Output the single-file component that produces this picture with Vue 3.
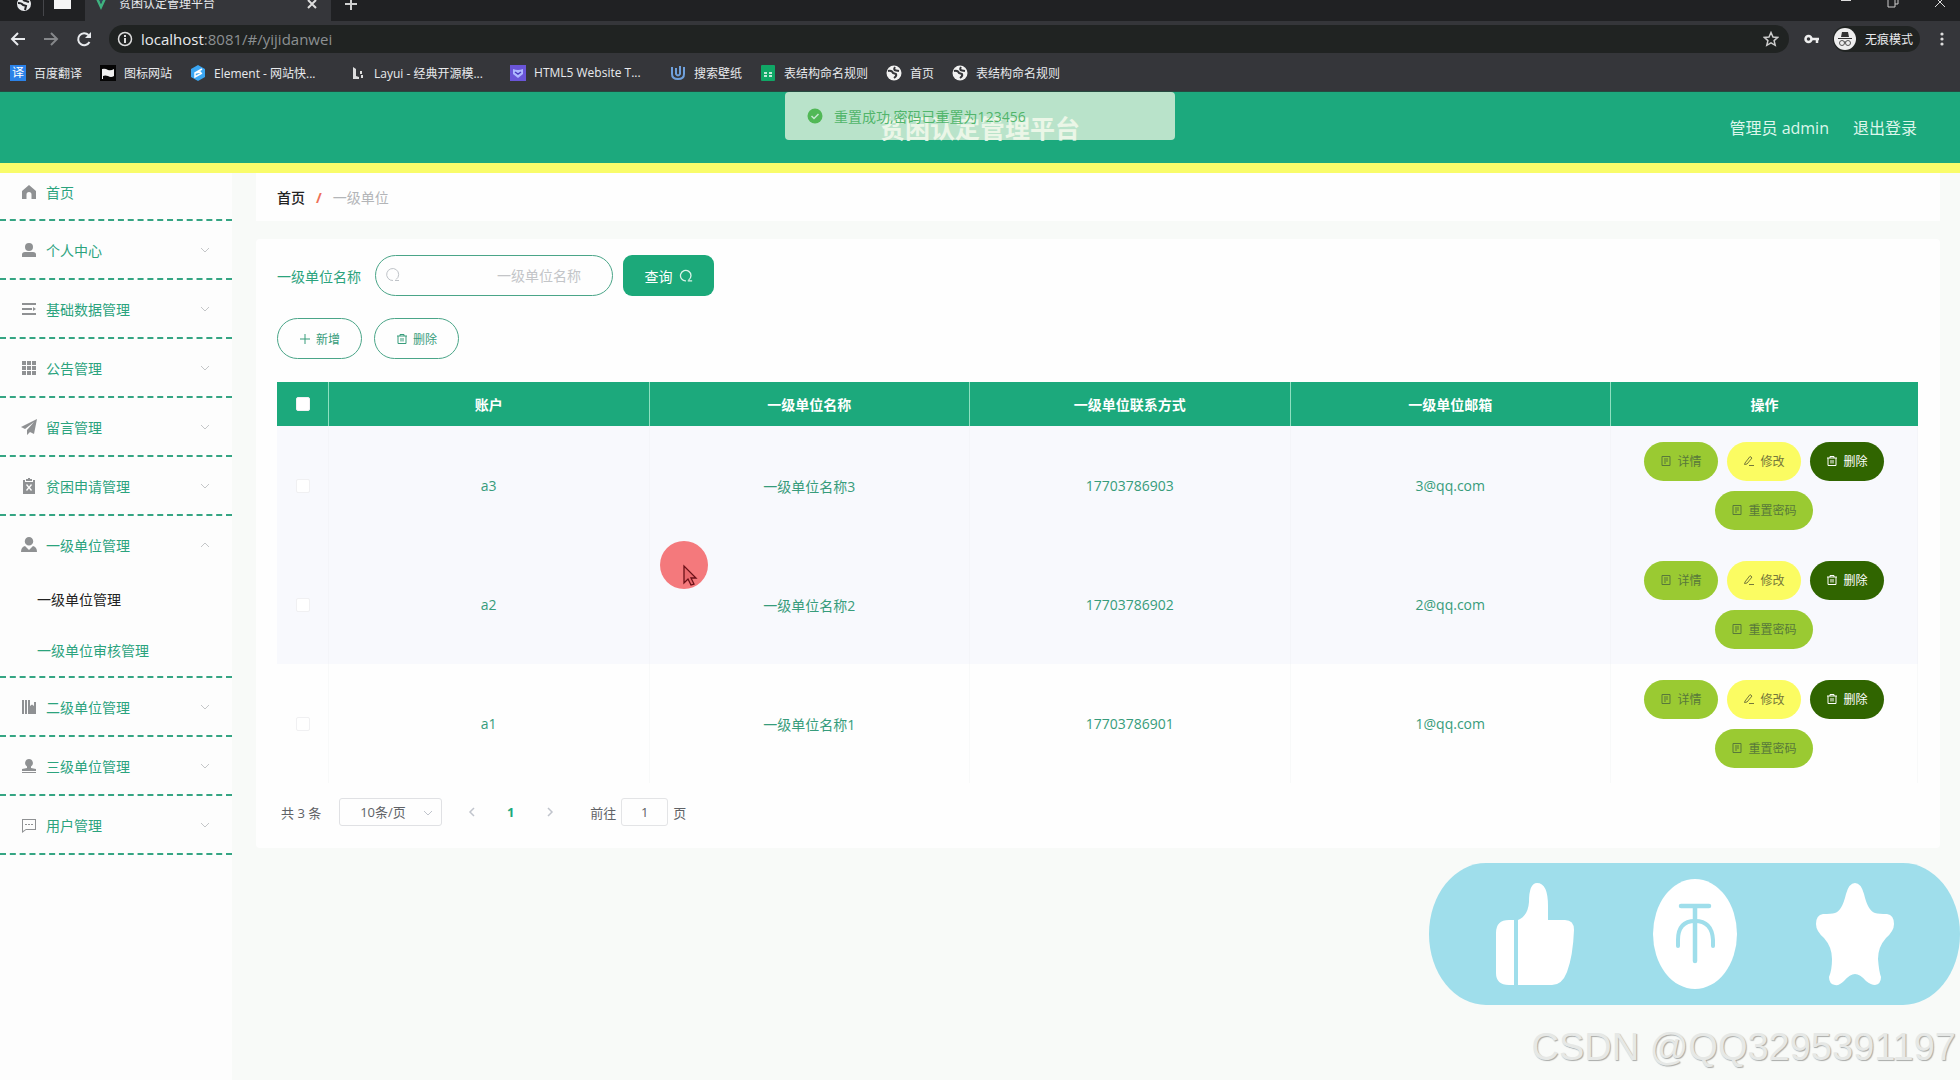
<script setup>
import { ref } from 'vue'

const bookmarks = [
  { icon: 'translate', label: '百度翻译' },
  { icon: 'flag', label: '图标网站' },
  { icon: 'element', label: 'Element - 网站快...', long: true },
  { icon: 'layui', label: 'Layui - 经典开源模...', long: true },
  { icon: 'html5', label: 'HTML5 Website T...', long: true },
  { icon: 'wallpaper', label: '搜索壁纸' },
  { icon: 'sheet', label: '表结构命名规则' },
  { icon: 'globe', label: '首页' },
  { icon: 'globe', label: '表结构命名规则' }
]

const glyphs = {
  home: 'M8 1 1 7v8h4.500v-4.500a2.500 2.500 0 0 1 5 0V15H15V7z',
  user: 'M8 1a4 4 0 1 1 0 8 4 4 0 0 1 0-8zM1 15v-2.500Q1 10 4 10h8q3 0 3 2.500V15z',
  list: 'M1 2h14v2H1zM1 7h10v2H1zM12 6l3 2-3 2zM1 12h14v2H1z',
  grid: 'M1 1h4v4H1zM6 1h4v4H6zM11 1h4v4h-4zM1 6h4v4H1zM6 6h4v4H6zM11 6h4v4h-4zM1 11h4v4H1zM6 11h4v4H6zM11 11h4v4h-4z',
  plane: 'M16 0 0 8l4 2 9-7-7 8v5l3-3 4 2z',
  clipboard: 'M2 2h2v2h8V2h2v14H2zM5 1h2V0h2v1h2v2H5zM5 7l2 2.500L5 12l1 1 2-2.500 2 2.500 1-1-2-2.500L11 7l-1-1-2 2.500L6 6z',
  custom: 'M8 0a4 4 0 1 1 0 8.500 4 4 0 0 1 0-8.500zM0 15q0-5 4-6l4 4 4-4q4 1 4 6z',
  books: 'M1 1h2v14H1zM4 1h2v14H4zM7 1h2v6l2-1.500L13 7V3h2v12H7z',
  stamp: 'M8 1a4 4 0 0 1 2 7.400V10l5 1v2H1v-2l5-1V8.400A4 4 0 0 1 8 1zM1 14h14v1H1z',
  chat: 'M1 2h14v11H5l-4 3zM2 3v11l3-2h9V3zM4 7h2v1H4zM7 7h2v1H7zM10 7h2v1h-2z'
}

const menu = [
  { icon: 'home', label: '首页', first: true },
  { icon: 'user', label: '个人中心', arrow: true },
  { icon: 'list', label: '基础数据管理', arrow: true },
  { icon: 'grid', label: '公告管理', arrow: true },
  { icon: 'plane', label: '留言管理', arrow: true },
  { icon: 'clipboard', label: '贫困申请管理', arrow: true },
  {
    icon: 'custom',
    label: '一级单位管理',
    arrow: true,
    open: true,
    children: [{ label: '一级单位管理', active: true }, { label: '一级单位审核管理' }]
  },
  { icon: 'books', label: '二级单位管理', arrow: true },
  { icon: 'stamp', label: '三级单位管理', arrow: true },
  { icon: 'chat', label: '用户管理', arrow: true }
]

const rows = [
  { account: 'a3', name: '一级单位名称3', phone: '17703786903', mail: '3@qq.com' },
  { account: 'a2', name: '一级单位名称2', phone: '17703786902', mail: '2@qq.com' },
  { account: 'a1', name: '一级单位名称1', phone: '17703786901', mail: '1@qq.com' }
]

const docPath = 'M2 1.500h8v9H2zM4 4h4M4 6h4M4 8h2'
const editPath = 'M2 8 7 1.500l2 1.500-5 6-2.500.500zM6 10.500h5'
const trashPath = 'M1 3h10M4 3V1.500h4V3M2 3v7.500h8V3M5 5v3.500M7 5v3.500'
const actions = [
  { label: '详情', kind: 'lime', d: docPath },
  { label: '修改', kind: 'yellow', d: editPath },
  { label: '删除', kind: 'dark', d: trashPath },
  { label: '重置密码', kind: 'lime wide', d: docPath }
]

const keyword = ref('')
const jump = ref('1')
</script>

<template>
  <div class="screen" lang="zh-CN">
    <div class="browser">
      <div class="tabs">
        <svg class="tab-globe" width="16" height="16" viewBox="0 0 16 16"><circle cx="8" cy="8" r="7" fill="#e8eaed" /><path d="M2 7q4 0 5 2l3 1-1 4M7 2q0 3 3 3l3 1" fill="none" stroke="#202124" stroke-width="2" /></svg>
        <span class="tab-line"></span>
        <span class="tab-card"></span>
        <div class="tab">
          <svg width="12" height="14" viewBox="0 0 12 14"><path d="M0 0h3l3 7 3-7h3L6 13z" fill="#3fb27f" /><path d="M3 0h2l1 2 1-2h2L6 7z" fill="#34495e" /></svg>
          <span class="tab-title">贫困认定管理平台</span>
          <svg width="10" height="10" viewBox="0 0 10 10"><path d="M1 1l8 8M9 1 1 9" stroke="#dedede" stroke-width="2" /></svg>
        </div>
        <svg class="tab-plus" width="12" height="12" viewBox="0 0 12 12"><path d="M6 0v12M0 6h12" stroke="#d0d0d0" stroke-width="2" /></svg>
        <div class="window-tools">
          <svg width="12" height="12" viewBox="0 0 12 12"><path d="M1 4h10" stroke="#ddd" stroke-width="2" /></svg>
          <svg width="12" height="12" viewBox="0 0 12 12"><path d="M1 3h7v8H1zM4 3V0h7v8H8" fill="none" stroke="#ccc" /></svg>
          <svg width="12" height="12" viewBox="0 0 12 12"><path d="M1 1l10 10M11 1 1 11" stroke="#ddd" /></svg>
        </div>
      </div>
      <div class="toolbar">
        <svg width="16" height="16" viewBox="0 0 16 16"><path d="M15 8H2M8 2 2 8l6 6" fill="none" stroke="#e8eaed" stroke-width="2" /></svg>
        <svg width="16" height="16" viewBox="0 0 16 16"><path d="M1 8h13M8 2l6 6-6 6" fill="none" stroke="#85878a" stroke-width="2" /></svg>
        <svg width="16" height="16" viewBox="0 0 16 16"><path d="M13.500 11A6 6 0 1 1 12.500 4" fill="none" stroke="#e8eaed" stroke-width="2" /><path d="M15 1v6H9z" fill="#e8eaed" /></svg>
        <div class="address">
          <svg width="16" height="16" viewBox="0 0 16 16"><circle cx="8" cy="8" r="6.500" fill="none" stroke="#ddd" stroke-width="1.500" /><path d="M8 7v5M8 4v2" stroke="#ddd" stroke-width="2" /></svg>
          <span class="url"><b>localhost</b>:8081/#/yijidanwei</span>
          <svg width="16" height="16" viewBox="0 0 16 16"><path d="M8 1.500l2 4.500 4.700.4-3.600 3.200 1.100 4.700L8 11.800l-4.200 2.500 1.100-4.700L1.300 6.400 6 6z" fill="none" stroke="#ccc" stroke-width="1.500" /></svg>
        </div>
        <svg class="key" width="16" height="16" viewBox="0 0 16 16"><circle cx="4.500" cy="8" r="3" fill="none" stroke="#eee" stroke-width="2.500" /><path d="M7 8h8M13 8v4" stroke="#eee" stroke-width="2.500" /></svg>
        <div class="incognito">
          <svg width="24" height="24" viewBox="0 0 24 24"><circle cx="12" cy="12" r="11" fill="#eee" /><path d="M9 5h6l1 5H8zM5 11h14v1H5z" fill="#333" /><g fill="none" stroke="#555"><circle cx="9" cy="16" r="2.500" /><circle cx="15" cy="16" r="2.500" /><path d="M11 15h2" /></g></svg>
          <span>无痕模式</span>
        </div>
        <svg class="dots" width="4" height="16" viewBox="0 0 4 16" fill="#ddd"><circle cx="2" cy="3" r="1.600" /><circle cx="2" cy="8" r="1.600" /><circle cx="2" cy="13" r="1.600" /></svg>
      </div>
      <nav class="bookmarks">
        <a v-for="(b, i) in bookmarks" :key="i" href="#" class="bookmark">
          <span v-if="b.icon === 'translate'" class="translate">译</span>
          <svg v-else width="16" height="16" viewBox="0 0 16 16">
            <template v-if="b.icon === 'flag'"><rect width="16" height="16" fill="#050505" /><path d="M2 4q3-1 6 1 3 1 6-1v7q-3 2-6 0-3-1-5 0v3H2z" fill="#eee" /></template>
            <template v-else-if="b.icon === 'element'"><path d="M8 0l7 4v8l-7 4-7-4V4z" fill="#3ba6f2" /><path d="M12 4 5 8v4l7-4M5 8l6-1" stroke="#fff" stroke-width="1.500" fill="none" /></template>
            <path v-else-if="b.icon === 'layui'" d="M3 2l3 2v7l3 1v2H3zM10 6h2v3h-2zM11 10h2v3h-2z" fill="#ddd" />
            <template v-else-if="b.icon === 'html5'"><rect width="16" height="16" fill="#6a55d8" /><path d="M3 4q5 2 10 0v5l-5 4-5-4z" fill="#aeb7ff" /><path d="M5 7l3 2 3-2" fill="none" stroke="#4b3bc0" stroke-width="1.500" /></template>
            <path v-else-if="b.icon === 'wallpaper'" d="M2 2v7q0 5 6 5t6-5V2M6 3v6q2 3 4 0V1" fill="none" stroke="#6fa0dc" stroke-width="2" />
            <template v-else-if="b.icon === 'sheet'"><rect x="1" width="14" height="16" rx="1" fill="#10a766" /><path d="M4 8h3M9 8h3M4 11h3M9 11h3" stroke="#fff" stroke-width="1.500" /></template>
            <template v-else><circle cx="8" cy="8" r="7.500" fill="#f1f1f1" /><path d="M2 6q4-1 5 2l3 1q1 2-2 4M9 2q-2 3 1 3.500l3 .500" fill="none" stroke="#35363a" stroke-width="2" /></template>
          </svg>
          <span :class="['bookmark-label', { long: b.long }]">{{ b.label }}</span>
        </a>
      </nav>
    </div>

    <header class="header">
      <h1>贫困认定管理平台</h1>
      <div class="account">
        <span>管理员 admin</span>
        <a href="#">退出登录</a>
      </div>
      <div class="message" role="alert">
        <svg width="16" height="16" viewBox="0 0 16 16"><circle cx="8" cy="8" r="7.500" fill="#51b856" /><path d="M4.500 8l2.500 2.500L11.500 6" fill="none" stroke="#c5e8cf" stroke-width="1.500" /></svg>
        <span>重置成功,密码已重置为123456</span>
      </div>
    </header>

    <div class="body">
      <aside class="sidebar">
        <ul>
          <li v-for="m in menu" :key="m.label" :class="{ first: m.first }">
            <a href="#" class="item">
              <svg width="16" height="16" viewBox="0 0 16 16"><path :d="glyphs[m.icon]" fill="#8f9193" fill-rule="evenodd" /></svg>
              <span>{{ m.label }}</span>
              <svg v-if="m.arrow" :class="['arrow', { open: m.open }]" width="12" height="12" viewBox="0 0 12 12"><path d="M2 4l4 4 4-4" fill="none" stroke="#c4c6c8" /></svg>
            </a>
            <div v-if="m.children" class="subs">
              <a v-for="c in m.children" :key="c.label" href="#" :class="['sub', { active: c.active }]">{{ c.label }}</a>
            </div>
          </li>
        </ul>
      </aside>

      <main class="main">
        <nav class="crumbs">
          <a href="#">首页</a><i>/</i><span>一级单位</span>
        </nav>

        <section class="panel">
          <form class="search" @submit.prevent>
            <label for="unit-name">一级单位名称</label>
            <div class="field">
              <svg width="16" height="16" viewBox="0 0 16 16"><path d="M11 12.500A6 6 0 1 0 8 13.500M10 13.500h4" fill="none" stroke="#bfc3c8" /></svg>
              <input id="unit-name" v-model="keyword" type="text" placeholder="一级单位名称" />
            </div>
            <button type="submit" class="query">查询
              <svg width="14" height="14" viewBox="0 0 16 16"><path d="M11 12.500A6 6 0 1 0 8 13.500M10 13.500h5" fill="none" stroke="#d9f3e8" stroke-width="1.500" /></svg>
            </button>
          </form>

          <div class="tools">
            <button type="button" class="outline">
              <svg width="12" height="12" viewBox="0 0 12 12"><path d="M6 1v10M1 6h10" fill="none" stroke="currentColor" /></svg>新增
            </button>
            <button type="button" class="outline">
              <svg width="12" height="12" viewBox="0 0 12 12"><path :d="trashPath" fill="none" stroke="currentColor" /></svg>删除
            </button>
          </div>

          <table>
            <colgroup>
              <col class="col-check" /><col /><col /><col /><col /><col class="col-ops" />
            </colgroup>
            <thead>
              <tr>
                <th><input type="checkbox" aria-label="全选" /></th>
                <th>账户</th>
                <th>一级单位名称</th>
                <th>一级单位联系方式</th>
                <th>一级单位邮箱</th>
                <th>操作</th>
              </tr>
            </thead>
            <tbody>
              <tr v-for="r in rows" :key="r.account">
                <td><input type="checkbox" :aria-label="r.account" /></td>
                <td>{{ r.account }}</td>
                <td>{{ r.name }}</td>
                <td>{{ r.phone }}</td>
                <td>{{ r.mail }}</td>
                <td>
                  <div class="ops">
                    <button v-for="a in actions" :key="a.label" type="button" :class="['op', a.kind]">
                      <svg width="12" height="12" viewBox="0 0 12 12"><path :d="a.d" fill="none" stroke="currentColor" /></svg>{{ a.label }}
                    </button>
                  </div>
                </td>
              </tr>
            </tbody>
          </table>

          <div class="pager">
            <span>共 3 条</span>
            <div class="size">
              <select aria-label="每页条数"><option>10条/页</option></select>
              <svg width="12" height="12" viewBox="0 0 12 12"><path d="M2 4l4 4 4-4" fill="none" stroke="#c0c4cc" /></svg>
            </div>
            <button type="button" class="step" aria-label="上一页"><svg width="12" height="12" viewBox="0 0 12 12"><path d="M8 2 4 6l4 4" fill="none" stroke="#c0c4cc" stroke-width="1.500" /></svg></button>
            <button type="button" class="step current">1</button>
            <button type="button" class="step" aria-label="下一页"><svg width="12" height="12" viewBox="0 0 12 12"><path d="M4 2l4 4-4 4" fill="none" stroke="#c0c4cc" stroke-width="1.500" /></svg></button>
            <label class="jump">前往<input v-model="jump" type="text" />页</label>
          </div>
        </section>
      </main>
    </div>

    <svg class="pointer" width="50" height="50" viewBox="0 0 50 50"><circle cx="25" cy="25" r="24" fill="#f4797c" /><path d="M25 26v17l4-4 3 6 3-1-3-6h5z" fill="#e8686c" stroke="#6b1118" stroke-width="1.300" /></svg>

    <div class="overlay">
      <div class="cheer">
        <svg width="80" height="104" viewBox="0 0 80 104" fill="#fff"><path d="M19 38v65h-5Q1 103 1 91V51Q1 38 14 38zM23 38q10-4 11-18Q34 1 42 1q11 0 11 23v14h17q9 0 9 10-1 26-7 42-5 13-15 13H23z" /></svg>
        <svg width="86" height="110" viewBox="0 0 86 110"><ellipse cx="43" cy="55" rx="42" ry="55" fill="#fff" /><g fill="none" stroke="#9fdeeb" stroke-width="4" stroke-linecap="round"><path d="M29 27h28M43 28v54" stroke-width="4.500" /><path d="M26 67V61Q26 42 43 42t18 19v6" /></g></svg>
        <svg width="80" height="104" viewBox="0 0 80 104" fill="#fff"><path d="M40 1q6 0 9 11 4 17 11 19 4 1 12 1 7 1 7 10 0 7-8 14-8 9-8 21 1 13 3 18 0 7-6 8-4 0-9-4-6-7-11-7t-11 7q-5 5-9 4-6-1-6-8 3-7 3-18 0-12-8-21-8-7-8-14 0-9 7-10 8 0 12-1 7-2 11-19Q34 1 40 1z" /></svg>
      </div>
      <div class="watermark">CSDN @QQ3295391197</div>
    </div>
  </div>
</template>

<style>
body {
  margin: 0;
  background: #f8faf8;
}
</style>

<style scoped>
.screen {
  position: relative;
  display: flex;
  flex-direction: column;
  min-height: 100vh;
  font-family: "Open Sans", "Noto Sans CJK SC", sans-serif;
  font-size: 14px;
  color: #2ba37d;
  background: #f8faf8;
}
* { box-sizing: border-box; }
a { color: inherit; text-decoration: none; }
svg { flex: none; display: block; }
button, input, select { font-family: inherit; margin: 0; }
button { cursor: pointer; }

/* browser frame */
.browser { background: #35363a; color: #e8eaed; font-size: 12px; border-bottom: 1px solid #264a40; }
.tabs { display: flex; align-items: flex-start; height: 21px; background: #202123; overflow: hidden; }
.tab-globe { margin: -4px 0 0 16px; }
.tab-line { width: 1px; height: 16px; margin-left: 11px; background: #45464a; }
.tab-card { width: 17px; height: 9px; margin-left: 10px; background: #f5f5f5; }
.tab { display: flex; align-items: center; width: 246px; height: 24px; margin: -1px 0 0 14px; padding: 0 14px 14px 10px; gap: 12px; background: #35363a; }
.tab-title { flex: 1; line-height: 16px; }
.tab-plus { margin: -2px 0 0 14px; }
.window-tools { display: flex; gap: 35px; margin: -4px 14px 0 auto; }
.toolbar { display: flex; align-items: center; height: 36px; padding-left: 10px; gap: 17px; }
.address { flex: 1; display: flex; align-items: center; gap: 8px; height: 28px; padding: 0 10px 0 8px; border-radius: 14px; background: #202322; }
.url { flex: 1; font-size: 15px; line-height: 20px; color: #8c9092; }
.url b { font-weight: 400; color: #e8eaed; }
.key { margin-left: -2px; }
.incognito { display: flex; align-items: center; gap: 8px; height: 26px; margin-left: -4px; padding-right: 7px; border-radius: 13px; background: #202322; }
.dots { margin: 0 16px 0 3px; }
.bookmarks { display: flex; align-items: center; gap: 18px; height: 34px; padding: 0 10px 3px; }
.bookmark { display: flex; align-items: center; gap: 8px; white-space: nowrap; }
.bookmark-label.long { width: 118px; }
.translate { width: 16px; height: 16px; line-height: 16px; text-align: center; color: #fff; background: #2b82e8; }

/* site header */
.header { position: relative; display: flex; align-items: center; justify-content: center; height: 81px; color: #fff; background: #1ca97d; border-bottom: 10px solid #f9fc6a; }
.header h1 { margin: 0; font-size: 25px; line-height: 36px; font-weight: 700; }
.account { position: absolute; right: 43px; display: flex; gap: 24px; font-size: 16px; line-height: 24px; color: #dcf6eb; }
.message { position: absolute; top: 0; left: 50%; display: flex; align-items: center; gap: 11px; width: 390px; height: 48px; padding: 0 22px; transform: translateX(-50%); border-radius: 4px; background: rgba(230, 244, 224, 0.78); color: #51b56b; }

/* layout */
.body { flex: 1; display: flex; }
.sidebar { width: 232px; background: #fdfdfd; }
.sidebar ul { margin: 0; padding: 0; list-style: none; }
.sidebar li { border-bottom: 2px dashed #35a583; }
.item { display: flex; align-items: center; gap: 9px; height: 57px; padding: 0 21px; }
.first .item { height: 46px; padding-bottom: 8px; }
.arrow { margin-left: auto; }
.arrow.open { transform: rotate(180deg); }
.subs { padding-bottom: 1px; }
.sub { display: flex; align-items: center; height: 51px; padding-left: 37px; }
.sub.active { color: #222; }
.main { flex: 1; min-width: 0; padding: 0 20px 0 24px; }
.crumbs { display: flex; align-items: center; gap: 11px; height: 48px; padding: 0 21px; background: #fefefe; }
.crumbs a { font-weight: 500; color: #222; }
.crumbs i { font-style: normal; font-weight: 700; color: #ee7259; }
.crumbs span { color: #b3b5b8; }
.panel { margin-top: 18px; padding: 16px 22px 22px 21px; background: #fefefe; border-radius: 4px; }

/* search */
.search { display: flex; align-items: center; }
.search label { width: 86px; }
.field { position: relative; width: 238px; margin: 0 10px 0 12px; }
.field svg { position: absolute; left: 10px; top: 12px; }
.field input { width: 100%; height: 41px; padding: 0 31px; border: 1px solid #4aa588; border-radius: 21px; background: transparent; font-size: 14px; text-align: right; color: #555; outline: none; }
.field input::placeholder { color: #c3c5c8; }
.query { display: flex; align-items: center; justify-content: center; gap: 6px; width: 91px; height: 41px; border: 0; border-radius: 9px; background: #1ca97a; color: #fff; font-size: 14px; }
.tools { display: flex; gap: 12px; margin: 22px 0 23px; }
.outline { display: flex; align-items: center; justify-content: center; gap: 5px; width: 85px; height: 41px; border: 1px solid #4aa588; border-radius: 21px; background: transparent; color: #379c7b; font-size: 12px; }

/* table */
table { width: 100%; table-layout: fixed; border-collapse: separate; border-spacing: 0; text-align: center; }
.col-check { width: 52px; }
.col-ops { width: 307px; }
th { height: 44px; padding: 0; background: #1ca97c; color: #fff; font-weight: 700; border-right: 1px solid #8ee0c0; }
th:last-child { border-right: 0; }
td { height: 119px; padding: 0; background: #f8f9fd; border-right: 1px solid #f4f5f9; color: #379c7b; }
tbody tr:last-child td { background: #fefefe; border-color: #f8f9f9; }
input[type="checkbox"] { appearance: none; display: block; width: 14px; height: 14px; margin: 0 auto; border: 1px solid #f0f0f2; border-radius: 2px; background: #fff; }
.ops { display: flex; flex-wrap: wrap; justify-content: center; gap: 10px 9px; }
.op { display: flex; align-items: center; justify-content: center; gap: 5px; width: 74px; height: 39px; padding: 0; border: 0; border-radius: 20px; font-size: 12px; }
.op.wide { width: 98px; }
.lime { background: #9aca32; color: #58793a; }
.yellow { background: #fbfc62; color: #75783a; }
.dark { background: #306500; color: #fff; }

/* pagination */
.pager { display: flex; align-items: center; height: 28px; margin-top: 15px; padding-left: 4px; font-size: 13px; color: #606266; }
.size { position: relative; width: 103px; margin: 0 10px 0 18px; }
.size select { width: 100%; height: 28px; padding: 0 32px 0 20px; appearance: none; border: 1px solid #e0e1e4; border-radius: 3px; background: transparent; color: #606266; font-size: 13px; }
.size svg { position: absolute; right: 8px; top: 9px; }
.step { display: flex; align-items: center; justify-content: center; width: 39px; height: 28px; padding: 0; border: 0; background: transparent; }
.step.current { color: #1ca97c; font-size: 13px; font-weight: 700; }
.jump { display: flex; align-items: center; gap: 5px; margin-left: 21px; }
.jump input { width: 47px; height: 28px; padding: 0; border: 1px solid #e3e4e6; border-radius: 3px; background: transparent; text-align: center; color: #606266; font-size: 13px; }

/* floating layers */
.pointer { position: absolute; left: 659px; top: 540px; }
.overlay { position: absolute; right: 0; bottom: 8px; display: flex; flex-direction: column; align-items: flex-end; }
.cheer { display: flex; align-items: center; justify-content: space-between; width: 531px; height: 142px; padding: 0 65px 0 66px; border-radius: 57px / 71px; background: #9fdeeb; }
.watermark { margin-top: 17px; padding-right: 4px; font-family: "Liberation Sans", sans-serif; font-size: 38px; line-height: 50px; color: #e6e8e6; text-shadow: 1px 1px 1px #a8aaa8; white-space: nowrap; }
</style>
